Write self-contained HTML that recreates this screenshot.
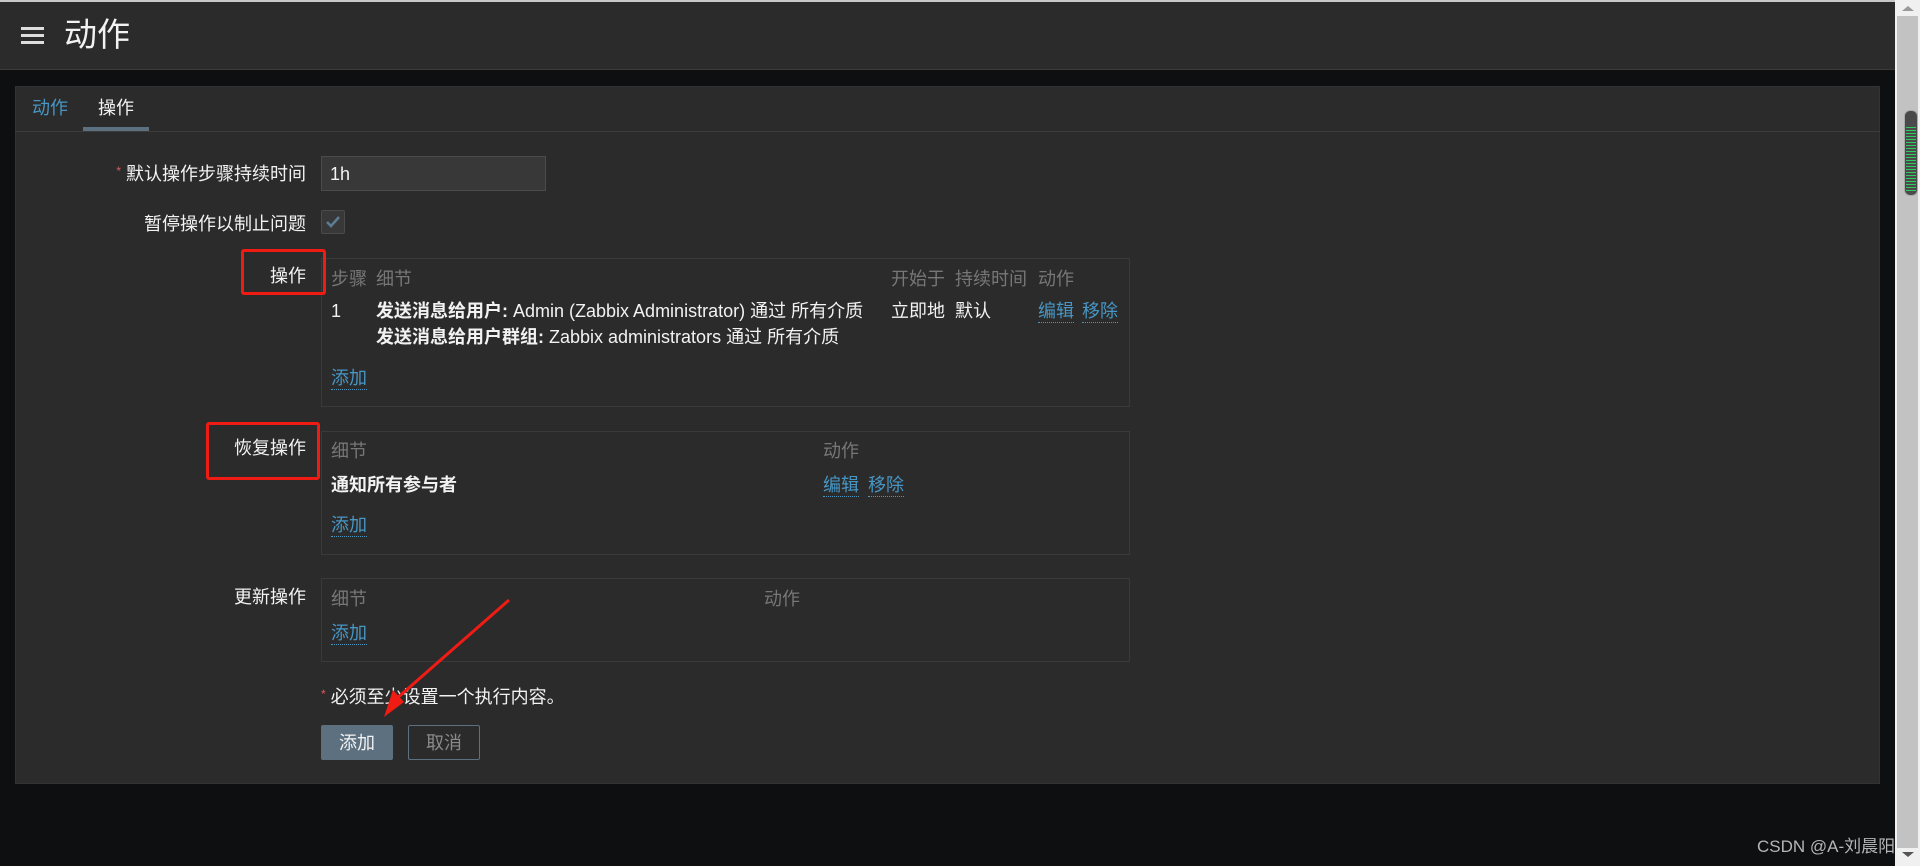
<!DOCTYPE html>
<html><head><meta charset="utf-8"><style>
*{margin:0;padding:0;box-sizing:border-box}
body{width:1920px;height:866px;background:#0e0f11;position:relative;overflow:hidden;font-family:"Liberation Sans","Noto Sans CJK SC",sans-serif;font-size:18px;color:#f2f2f2}
.a{position:absolute;white-space:nowrap;line-height:1}
.g{color:#777}
.l{color:#4796c4;border-bottom:1px dotted #4796c4;padding-bottom:2px}
.box{position:absolute;border:1px solid #3a3a3a;background:#2b2b2b}
.lab{position:absolute;right:1614px;white-space:nowrap;line-height:1}
.red{position:absolute;border:3px solid #f01c14;border-radius:3px}
b{font-weight:bold}
</style></head><body>
<div style="position:absolute;left:0;top:0;width:1895px;height:70px;background:#2b2b2b;border-top:2px solid #c8c8c8;border-bottom:1px solid #3a3a3a"></div>
<div style="position:absolute;left:21px;top:27px;width:23px;height:3px;background:#ddd"></div>
<div style="position:absolute;left:21px;top:34px;width:23px;height:3px;background:#ddd"></div>
<div style="position:absolute;left:21px;top:41px;width:23px;height:3px;background:#ddd"></div>
<div class="a" style="left:64px;top:18px;font-size:33px;color:#f2f2f2">动作</div>

<div style="position:absolute;left:15px;top:86px;width:1865px;height:698px;background:#2b2b2b;border:1px solid #333"></div>
<div style="position:absolute;left:15px;top:131px;width:1865px;height:1px;background:#3c3c3c"></div>
<div class="a" style="left:32px;top:99px;color:#4796c4">动作</div>
<div class="a" style="left:98px;top:99px">操作</div>
<div style="position:absolute;left:83px;top:127px;width:66px;height:4px;background:#5d7080"></div>

<div class="lab" style="top:165px"><span style="color:#e45959;font-size:12px;vertical-align:top">*</span> 默认操作步骤持续时间</div>
<div style="position:absolute;left:321px;top:156px;width:225px;height:35px;background:#383838;border:1px solid #4b4b4b"></div>
<div class="a" style="left:330px;top:165px">1h</div>
<div class="lab" style="top:215px">暂停操作以制止问题</div>
<div style="position:absolute;left:321px;top:210px;width:24px;height:24px;background:#383838;border:1px solid #4b4b4b;border-radius:2px"></div>
<svg style="position:absolute;left:324px;top:213px" width="18" height="18"><path d="M3 9 L7 13 L15 4" stroke="#5d7d92" stroke-width="2.5" fill="none"/></svg>

<div class="box" style="left:321px;top:258px;width:809px;height:149px"></div>
<div class="lab" style="top:267px">操作</div>
<div class="red" style="left:241px;top:249px;width:85px;height:46px"></div>
<div class="a g" style="left:331px;top:270px">步骤</div>
<div class="a g" style="left:376px;top:270px">细节</div>
<div class="a g" style="left:891px;top:270px">开始于</div>
<div class="a g" style="left:955px;top:270px">持续时间</div>
<div class="a g" style="left:1038px;top:270px">动作</div>
<div class="a" style="left:331px;top:302px">1</div>
<div class="a" style="left:376px;top:302px"><b>发送消息给用户:</b> Admin (Zabbix Administrator) 通过 所有介质</div>
<div class="a" style="left:376px;top:328px"><b>发送消息给用户群组:</b> Zabbix administrators 通过 所有介质</div>
<div class="a" style="left:891px;top:302px">立即地</div>
<div class="a" style="left:955px;top:302px">默认</div>
<div class="a l" style="left:1038px;top:302px">编辑</div>
<div class="a l" style="left:1082px;top:302px">移除</div>
<div class="a l" style="left:331px;top:369px">添加</div>

<div class="box" style="left:321px;top:431px;width:809px;height:124px"></div>
<div class="lab" style="top:439px">恢复操作</div>
<div class="red" style="left:206px;top:422px;width:114px;height:58px"></div>
<div class="a g" style="left:331px;top:442px">细节</div>
<div class="a g" style="left:823px;top:442px">动作</div>
<div class="a" style="left:331px;top:476px"><b>通知所有参与者</b></div>
<div class="a l" style="left:823px;top:476px">编辑</div>
<div class="a l" style="left:868px;top:476px">移除</div>
<div class="a l" style="left:331px;top:516px">添加</div>

<div class="box" style="left:321px;top:578px;width:809px;height:84px"></div>
<div class="lab" style="top:588px">更新操作</div>
<div class="a g" style="left:331px;top:590px">细节</div>
<div class="a g" style="left:764px;top:590px">动作</div>
<div class="a l" style="left:331px;top:624px">添加</div>

<div class="a" style="left:321px;top:688px"><span style="color:#e45959;font-size:12px;vertical-align:top">*</span> 必须至少设置一个执行内容。</div>
<div style="position:absolute;left:321px;top:725px;width:72px;height:35px;background:#5d7080;border-radius:2px"></div>
<div class="a" style="left:339px;top:734px">添加</div>
<div style="position:absolute;left:408px;top:725px;width:72px;height:35px;border:1px solid #5d7080;border-radius:2px"></div>
<div class="a" style="left:426px;top:734px;color:#8a8a8a">取消</div>

<svg style="position:absolute;left:0;top:0" width="1920" height="866"><path d="M509 600 L395 700" stroke="#f01c14" stroke-width="3"/><path d="M384 717 L393 690 L404 702 Z" fill="#f01c14"/></svg>

<div style="position:absolute;left:1895px;top:0;width:25px;height:866px;background:#f0f0f0"></div>
<div style="position:absolute;left:1897px;top:16px;width:21px;height:832px;background:#c2c2c2"></div>
<div style="position:absolute;left:1902px;top:6px;width:0;height:0;border-left:6px solid transparent;border-right:6px solid transparent;border-bottom:5px solid #999"></div>
<div style="position:absolute;left:1902px;top:852px;width:0;height:0;border-left:6px solid transparent;border-right:6px solid transparent;border-top:5px solid #555"></div>
<div style="position:absolute;left:1904px;top:110px;width:14px;height:86px;background:#4a4a4a;border-radius:6px;border:1px solid #aaa"></div>
<div style="position:absolute;left:1906px;top:127px;width:10px;height:66px;background:repeating-linear-gradient(#2ecc60 0 1px,transparent 1px 3px)"></div>
<div class="a" style="left:1757px;top:838px;font-size:17px;color:#b5b5b5">CSDN @A-刘晨阳</div>
</body></html>
